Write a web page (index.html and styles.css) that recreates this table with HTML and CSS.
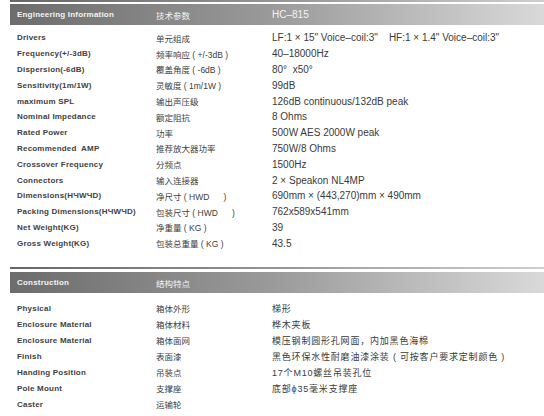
FILE: index.html
```html
<!DOCTYPE html>
<html lang="zh">
<head>
<meta charset="utf-8">
<title>HC-815 Specifications</title>
<link rel="stylesheet" href="styles.css">
</head>
<body>
<div class="sheet">
  <section class="block block-eng">
    <div class="rule"></div>
    <div class="head">
      <span class="lab">Engineering Information</span>
      <span class="cn">技术参数</span>
      <span class="val">HC–815</span>
    </div>
    <div class="rows">
      <div class="row"><span class="lab">Drivers</span><span class="cn">单元组成</span><span class="val">LF:1 × 15" Voice–coil:3"&nbsp;&nbsp;&nbsp; HF:1 × 1.4" Voice–coil:3"</span></div>
      <div class="row"><span class="lab">Frequency(+/-3dB)</span><span class="cn">频率响应 ( +/-3dB )</span><span class="val">40–18000Hz</span></div>
      <div class="row"><span class="lab">Dispersion(-6dB)</span><span class="cn">覆盖角度 ( -6dB )</span><span class="val">80°&nbsp; x50°</span></div>
      <div class="row"><span class="lab">Sensitivity(1m/1W)</span><span class="cn">灵敏度 ( 1m/1W )</span><span class="val">99dB</span></div>
      <div class="row"><span class="lab">maximum SPL</span><span class="cn">输出声压级</span><span class="val">126dB continuous/132dB peak</span></div>
      <div class="row"><span class="lab">Nominal Impedance</span><span class="cn">额定阻抗</span><span class="val">8 Ohms</span></div>
      <div class="row"><span class="lab">Rated Power</span><span class="cn">功率</span><span class="val">500W AES 2000W peak</span></div>
      <div class="row"><span class="lab">Recommended&nbsp; AMP</span><span class="cn">推荐放大器功率</span><span class="val">750W/8 Ohms</span></div>
      <div class="row"><span class="lab">Crossover Frequency</span><span class="cn">分频点</span><span class="val">1500Hz</span></div>
      <div class="row"><span class="lab">Connectors</span><span class="cn">输入连接器</span><span class="val">2 × Speakon NL4MP</span></div>
      <div class="row"><span class="lab">Dimensions(HЧWЧD)</span><span class="cn">净尺寸 ( HWD&nbsp;&nbsp;&nbsp;&nbsp;&nbsp; )</span><span class="val">690mm × (443,270)mm × 490mm</span></div>
      <div class="row"><span class="lab">Packing Dimensions(HЧWЧD)</span><span class="cn">包装尺寸 ( HWD&nbsp;&nbsp;&nbsp;&nbsp;&nbsp; )</span><span class="val">762x589x541mm</span></div>
      <div class="row"><span class="lab">Net Weight(KG)</span><span class="cn">净重量 ( KG )</span><span class="val">39</span></div>
      <div class="row"><span class="lab">Gross Weight(KG)</span><span class="cn">包装总重量 ( KG )</span><span class="val">43.5</span></div>
    </div>
  </section>

  <section class="block block-con">
    <div class="rule"></div>
    <div class="head">
      <span class="lab">Construction</span>
      <span class="cn">结构特点</span>
      <span class="val"></span>
    </div>
    <div class="rows">
      <div class="row row-con"><span class="lab">Physical</span><span class="cn">箱体外形</span><span class="val cjk">梯形</span></div>
      <div class="row row-con"><span class="lab">Enclosure Material</span><span class="cn">箱体材料</span><span class="val cjk">桦木夹板</span></div>
      <div class="row row-con"><span class="lab">Enclosure Material</span><span class="cn">箱体面网</span><span class="val cjk">模压钢制圆形孔网面，内加黑色海棉</span></div>
      <div class="row row-con"><span class="lab">Finish</span><span class="cn">表面漆</span><span class="val cjk">黑色环保水性耐磨油漆涂装 ( 可按客户要求定制颜色 )</span></div>
      <div class="row row-con"><span class="lab">Handing Position</span><span class="cn">吊装点</span><span class="val cjk">17个M10螺丝吊装孔位</span></div>
      <div class="row row-con"><span class="lab">Pole Mount</span><span class="cn">支撑座</span><span class="val cjk">底部ϕ35毫米支撑座</span></div>
      <div class="row row-con"><span class="lab">Caster</span><span class="cn">运输轮</span><span class="val cjk"></span></div>
    </div>
  </section>
</div>
</body>
</html>
```

FILE: styles.css
```css
html, body {
  margin: 0;
  padding: 0;
  background: #ffffff;
}

body {
  font-family: "Liberation Sans", Arial, "Noto Sans CJK SC", sans-serif;
  color: #3d3d3d;
}

.sheet {
  padding-left: 10px;
}

.rule {
  height: 2px;
  margin-bottom: 2px;
  background: linear-gradient(to right, #666666 0%, #959595 50%, #cfcfcf 100%);
}

.head {
  height: 21px;
  display: grid;
  grid-template-columns: 139px 116px 1fr;
  align-items: center;
  padding-left: 7px;
  background: linear-gradient(to right, #6c6c6c 0%, #9a9a9a 49%, #d9d9d9 100%);
}

.head .lab,
.head .cn,
.head .val {
  color: #f4f4f4;
}

.rows {
  padding-top: 5px;
}

.block-con {
  margin-top: 16px;
}

.block-con .rule {
  margin-bottom: 3px;
}

.block-con .rows {
  padding-top: 7px;
}

.row {
  height: 15.8px;
  display: grid;
  grid-template-columns: 139px 116px 1fr;
  align-items: center;
  padding-left: 7px;
}

.row-con {
  height: 16px;
}

.lab {
  font-family: "Liberation Sans", Arial, sans-serif;
  font-weight: bold;
  font-size: 8px;
  letter-spacing: 0.2px;
  color: #3f3f3f;
  white-space: nowrap;
}

.cn {
  font-family: "Liberation Sans", "Noto Sans CJK SC", sans-serif;
  font-size: 8.5px;
  color: #404040;
  white-space: pre;
}

.val {
  font-family: "Liberation Sans", Arial, sans-serif;
  font-size: 10px;
  color: #3a3a3a;
  white-space: nowrap;
}

.val.cjk {
  font-family: "Liberation Sans", "Noto Sans CJK SC", sans-serif;
  font-size: 9px;
  letter-spacing: 0.8px;
}
```
